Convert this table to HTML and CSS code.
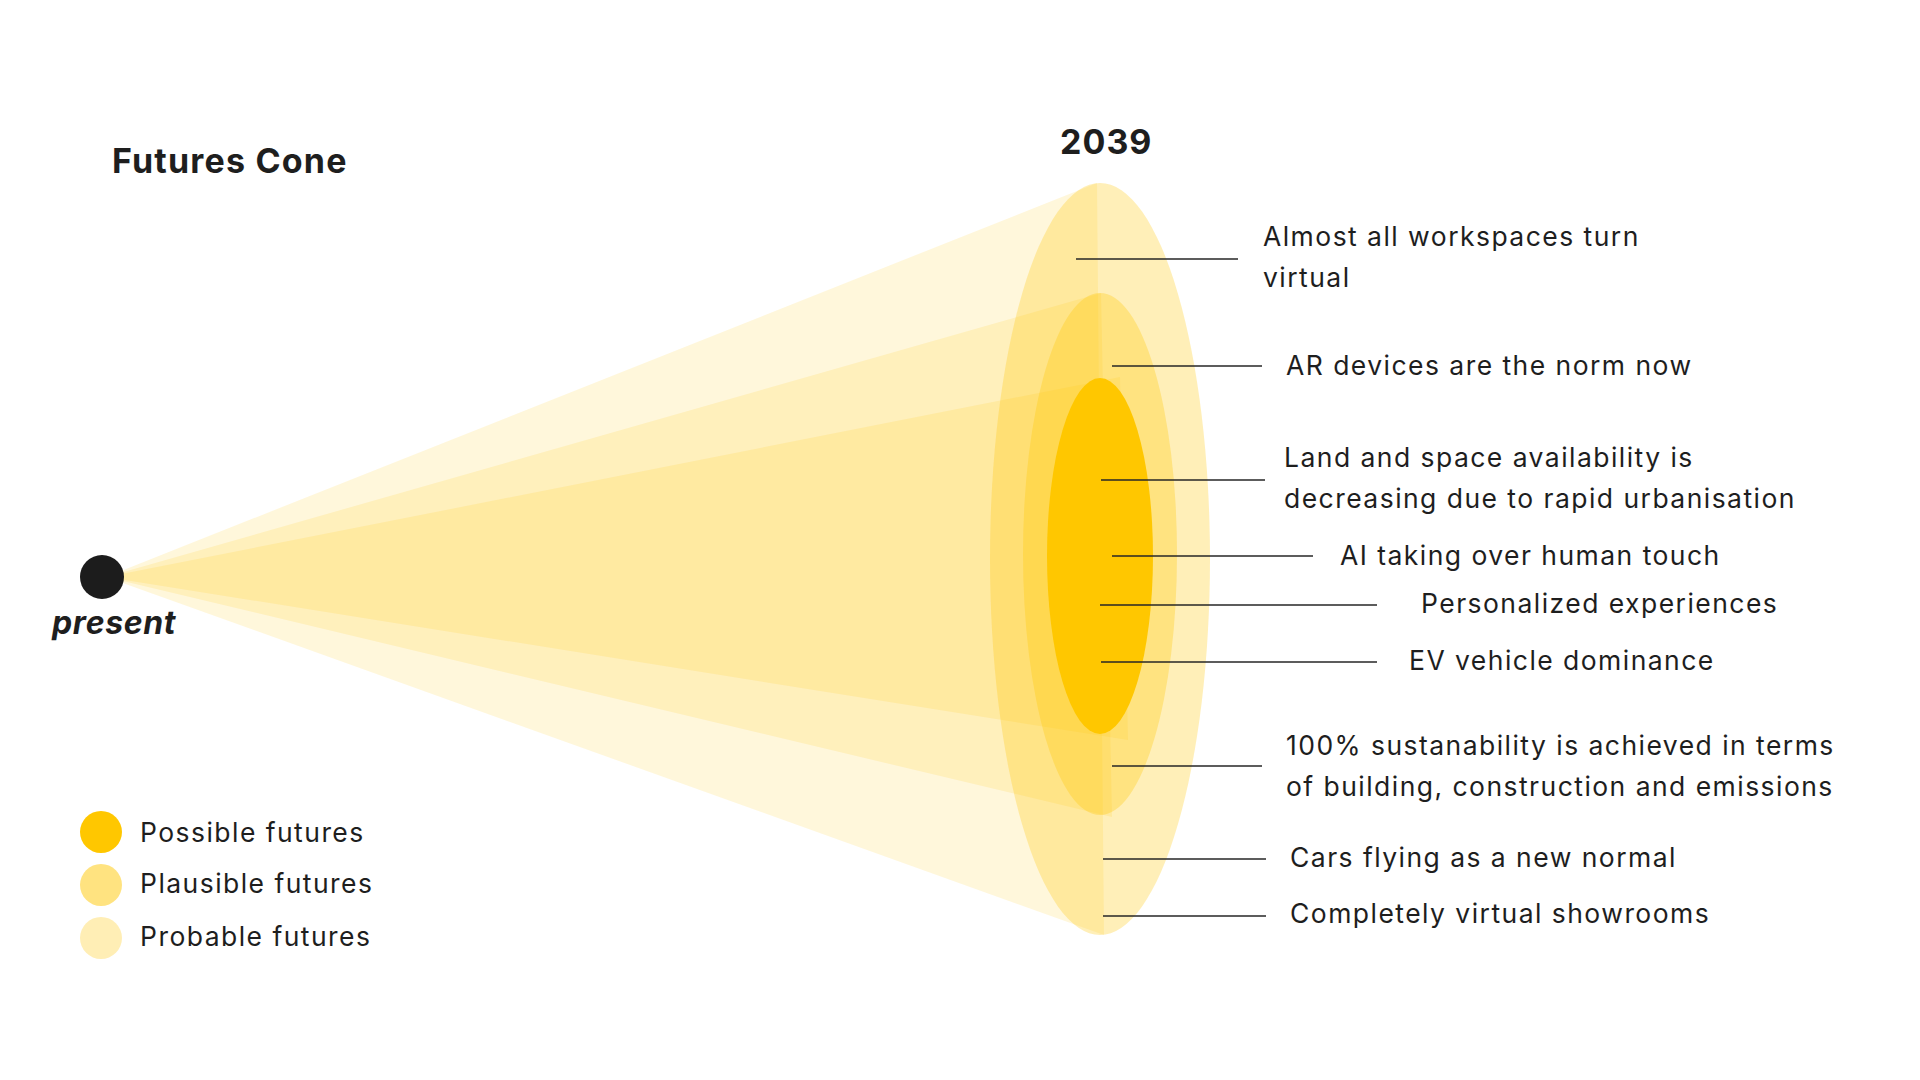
FILE: index.html
```html
<!DOCTYPE html>
<html lang="en">
<head>
<meta charset="utf-8">
<title>Futures Cone</title>
<link rel="stylesheet" href="styles.css">
</head>
<body>
<main class="stage">
  <svg class="cone" width="1920" height="1080" viewBox="0 0 1920 1080" xmlns="http://www.w3.org/2000/svg" aria-hidden="true">
    <g fill="#FFC700">
      <polygon class="tri" points="106,577 1097,183 1104,935"/>
      <ellipse class="ell-probable" cx="1100" cy="559" rx="110" ry="376"/>
      <polygon class="tri" points="106,577 1101,293 1112,817"/>
      <ellipse class="ell-plausible" cx="1100" cy="554" rx="77" ry="261"/>
      <polygon class="tri" points="106,577 1120,377 1128,740"/>
      <ellipse class="ell-possible" cx="1100" cy="556" rx="53" ry="178"/>
    </g>
    <g class="leaders">
      <line x1="1076" y1="259" x2="1238" y2="259"/>
      <line x1="1112" y1="366" x2="1262" y2="366"/>
      <line x1="1101" y1="480" x2="1265" y2="480"/>
      <line x1="1112" y1="556" x2="1313" y2="556"/>
      <line x1="1100" y1="605" x2="1377" y2="605"/>
      <line x1="1101" y1="662" x2="1377" y2="662"/>
      <line x1="1112" y1="766" x2="1262" y2="766"/>
      <line x1="1103" y1="859" x2="1266" y2="859"/>
      <line x1="1103" y1="916" x2="1266" y2="916"/>
    </g>
    <circle class="now" cx="102" cy="577" r="22"/>
  </svg>

  <h1 class="title">Futures Cone</h1>

  <ul class="legend">
    <li class="legend-item"><span class="swatch swatch-possible"></span><span class="legend-text">Possible futures</span></li>
    <li class="legend-item"><span class="swatch swatch-plausible"></span><span class="legend-text">Plausible futures</span></li>
    <li class="legend-item"><span class="swatch swatch-probable"></span><span class="legend-text">Probable futures</span></li>
  </ul>

  <div class="year">2039</div>
  <div class="present">present</div>

  <p class="label two l-almost">Almost all workspaces turn<br>virtual</p>
  <p class="label l-ar">AR devices are the norm now</p>
  <p class="label two l-land">Land and space availability is<br>decreasing due to rapid urbanisation</p>
  <p class="label l-ai">AI taking over human touch</p>
  <p class="label l-pers">Personalized experiences</p>
  <p class="label l-ev">EV vehicle dominance</p>
  <p class="label two l-sust">100% sustanability is achieved in terms<br>of building, construction and emissions</p>
  <p class="label l-cars">Cars flying as a new normal</p>
  <p class="label l-show">Completely virtual showrooms</p>
</main>
</body>
</html>
```

FILE: styles.css
```css
* {
  box-sizing: border-box;
}

html, body {
  margin: 0;
  padding: 0;
  background: #ffffff;
}

body {
  font-family: Inter, "Noto Sans", "Liberation Sans", sans-serif;
  color: #1e1e1e;
}

.stage {
  position: relative;
  width: 1920px;
  height: 1080px;
  overflow: hidden;
  padding-top: 141px;
  display: flex;
  flex-direction: column;
}

.cone {
  position: absolute;
  left: 0;
  top: 0;
}

.tri {
  fill-opacity: 0.14;
}

.ell-probable {
  fill-opacity: 0.28;
}

.ell-plausible {
  fill-opacity: 0.3;
}

.ell-possible {
  fill-opacity: 1;
}

.leaders line {
  stroke: #262626;
  stroke-width: 1.4;
}

.now {
  fill: #1c1c1c;
}

.title {
  position: relative;
  margin: 0 0 0 112px;
  font-size: 34px;
  line-height: 40px;
  font-weight: 700;
  letter-spacing: 0.035em;
}

.legend {
  position: relative;
  list-style: none;
  margin: 630px 0 0 80px;
  padding: 0;
  display: flex;
  flex-direction: column;
  gap: 11px;
}

.legend-item {
  display: flex;
  align-items: center;
  gap: 18px;
  height: 42px;
  font-size: 26.5px;
  letter-spacing: 0.055em;
}

.legend-item:nth-child(2) .legend-text {
  margin-top: -4px;
}

.legend-item:nth-child(3) .legend-text {
  margin-top: -5px;
}

.swatch {
  width: 42px;
  height: 42px;
  border-radius: 50%;
  flex: none;
}

.swatch-possible {
  background: #FFC700;
}

.swatch-plausible {
  background: #FFE380;
}

.swatch-probable {
  background: #FFEEB5;
}

.year {
  position: absolute;
  left: 1060px;
  top: 122px;
  font-size: 34px;
  line-height: 40px;
  font-weight: 700;
  letter-spacing: 0.03em;
}

.present {
  position: absolute;
  left: 52px;
  top: 603px;
  font-size: 32px;
  line-height: 40px;
  font-weight: 700;
  font-style: italic;
  letter-spacing: 0.02em;
}

.label {
  position: absolute;
  margin: 0;
  font-size: 26.5px;
  line-height: 41px;
  letter-spacing: 0.055em;
  white-space: nowrap;
}

.l-almost { left: 1263px; top: 216px; }
.l-ar     { left: 1286px; top: 345px; }
.l-land   { left: 1284px; top: 437px; }
.l-ai     { left: 1340px; top: 535px; }
.l-pers   { left: 1421px; top: 583px; }
.l-ev     { left: 1409px; top: 640px; }
.l-sust   { left: 1286px; top: 725px; }
.l-cars   { left: 1290px; top: 837px; }
.l-show   { left: 1290px; top: 893px; }
```
